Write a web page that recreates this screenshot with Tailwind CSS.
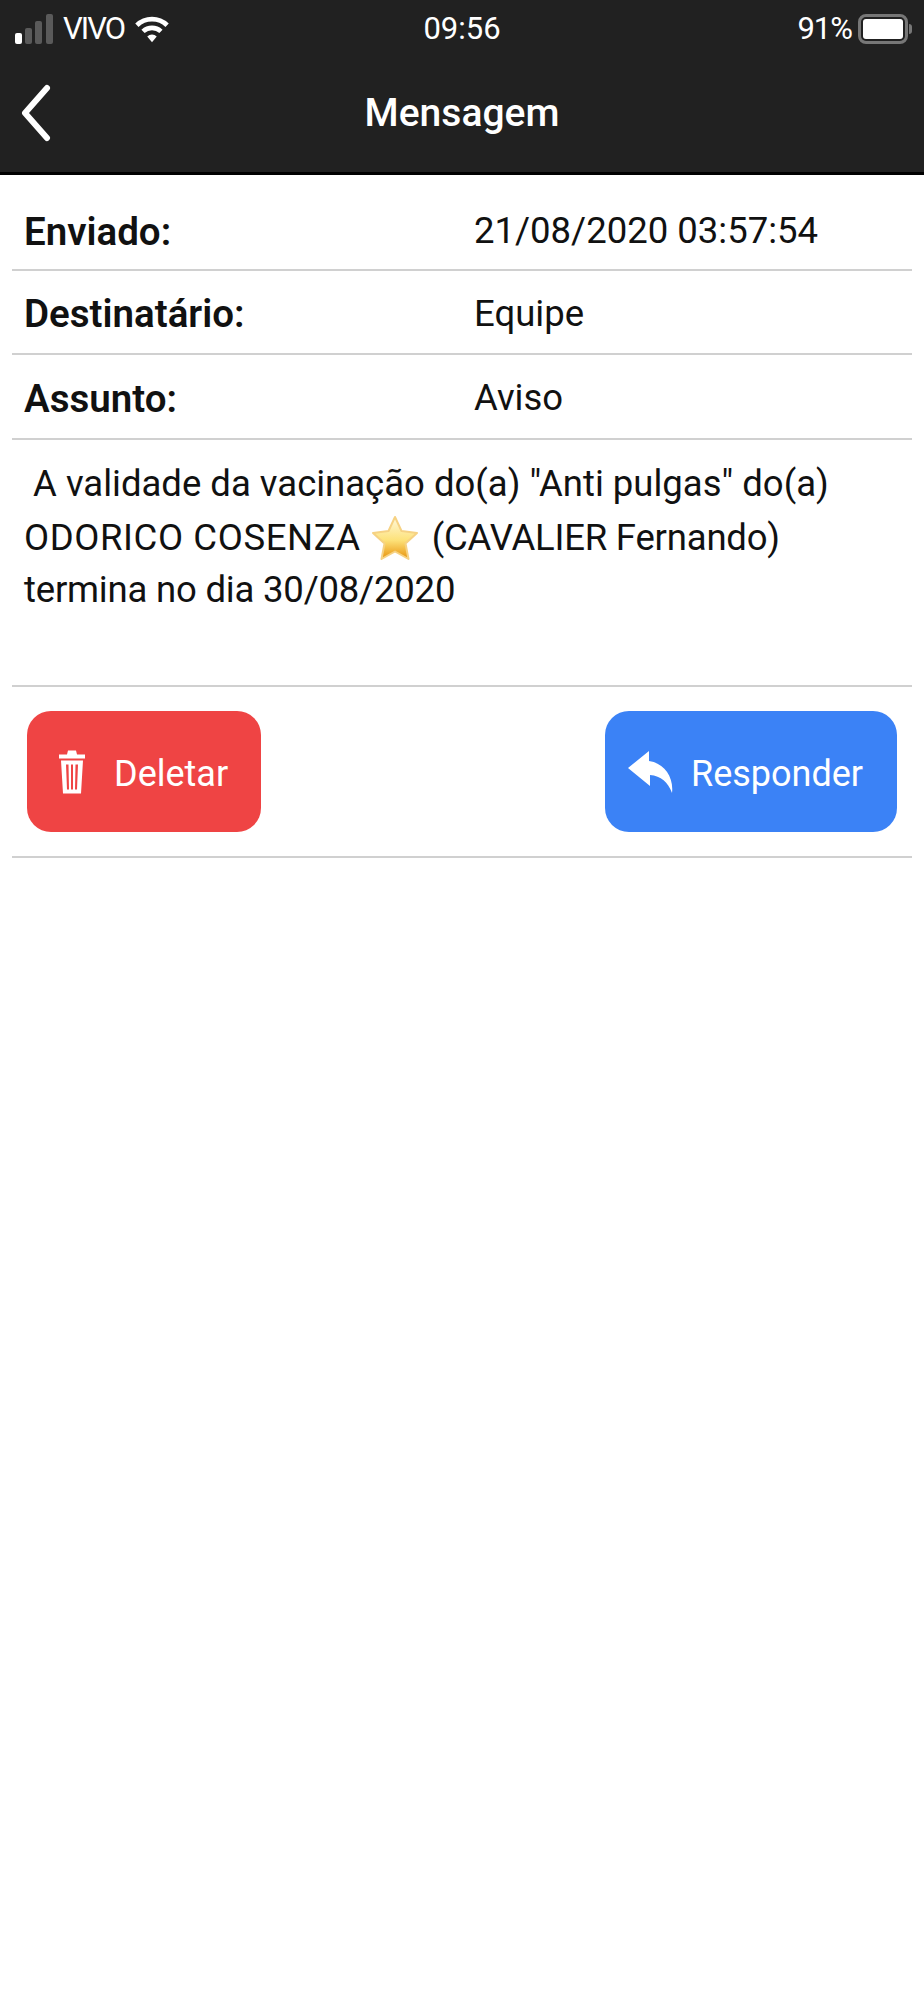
<!DOCTYPE html>
<html lang="pt-BR">
<head>
  <meta charset="UTF-8">
  <title>Mensagem</title>
  <script src="https://cdn.jsdelivr.net/npm/@tailwindcss/browser@4"></script>
</head>
<body class="bg-white min-h-screen font-['Roboto',sans-serif] text-[#111]">

  <!-- Barra do topo -->
  <header class="bg-[#212121] h-[175px] border-b-[3px] border-black text-white flex flex-col">
    <div class="h-[58px] pl-[15px] pr-[12px] flex items-center justify-between text-[31px]">
      <div class="flex items-center flex-1">
        <svg width="38" height="30" viewBox="0 0 38 30" class="mr-[10px]">
          <rect x="0" y="19" width="7" height="11" rx="2" fill="#fff"/>
          <rect x="10" y="14" width="7" height="16" rx="2" fill="#5a5a5a"/>
          <rect x="20" y="7" width="7" height="23" rx="2" fill="#5a5a5a"/>
          <rect x="31" y="0" width="7" height="30" rx="2" fill="#5a5a5a"/>
        </svg>
        <span class="tracking-[-2px]">VIVO</span>
        <svg width="34" height="30" viewBox="0 0 36 30" class="ml-[11px]">
          <path d="M2 11 A23 23 0 0 1 34 11" fill="none" stroke="#fff" stroke-width="5"/>
          <path d="M8.500 17.500 A14 14 0 0 1 27.500 17.500" fill="none" stroke="#fff" stroke-width="5"/>
          <path d="M13 23 L18 29 L23 23 A7 7 0 0 0 13 23 Z" fill="#fff"/>
        </svg>
      </div>
      <span class="flex-1 text-center pr-[3px]">09:56</span>
      <div class="flex items-center justify-end flex-1">
        <span class="mr-[6px] tracking-[-1px]">91%</span>
        <div class="w-[50px] h-[30px] border-[3px] border-[#777] rounded-[8px] p-[2px]">
          <div class="w-full h-full bg-white rounded-[3px]"></div>
        </div>
        <div class="w-[3px] h-[10px] bg-[#777] rounded-r-full ml-[1px]"></div>
      </div>
    </div>
    <div class="relative flex-1 flex items-center justify-center pb-[3px]">
      <svg width="30" height="58" viewBox="0 0 30 58" class="absolute left-[21px] top-[26px]">
        <path d="M26 4 L4 29 L26 54" fill="none" stroke="#fff" stroke-width="6" stroke-linecap="round" stroke-linejoin="round"/>
      </svg>
      <h1 class="text-[39px] font-medium">Mensagem</h1>
    </div>
  </header>

  <main class="px-[12px]">
    <div class="h-[96px] border-b-2 border-[#d0d0d0] flex items-center pl-[12px] pt-[19px]">
      <b class="w-[450px] text-[38.5px] font-semibold">Enviado:</b>
      <span class="text-[36.5px]">21/08/2020 03:57:54</span>
    </div>
    <div class="h-[84px] border-b-2 border-[#d0d0d0] flex items-center pl-[12px] pt-[4px]">
      <b class="w-[450px] text-[38.5px] font-semibold">Destinatário:</b>
      <span class="text-[36.5px]">Equipe</span>
    </div>
    <div class="h-[85px] border-b-2 border-[#d0d0d0] flex items-center pl-[12px] pt-[4px]">
      <b class="w-[450px] text-[38.5px] font-semibold">Assunto:</b>
      <span class="text-[36.5px]">Aviso</span>
    </div>

    <!-- Texto da mensagem -->
    <div class="h-[247px] border-b-2 border-[#d0d0d0] pl-[12px] pt-[17px] text-[36.5px] leading-[54px]">
      <div>&nbsp;A validade da vacinação do(a) "Anti pulgas" do(a)</div>
      <div class="flex items-center">
        <span class="tracking-[0.6px]">ODORICO COSENZA</span>
        <svg width="48" height="50" viewBox="0 0 48 46" class="ml-[10px] mr-[13px]">
          <defs>
            <linearGradient id="estrela" x1="0" y1="0" x2="0" y2="1">
              <stop offset="0" stop-color="#fff8dc"/>
              <stop offset="0.55" stop-color="#fde27a"/>
              <stop offset="1" stop-color="#e8930c"/>
            </linearGradient>
          </defs>
          <path d="M24 2 L30.500 16 L46 18 L34.500 28.500 L37.500 44 L24 36.500 L10.500 44 L13.500 28.500 L2 18 L17.500 16 Z" fill="url(#estrela)" stroke="#f6d283" stroke-width="2" stroke-linejoin="round"/>
        </svg>
        <span class="tracking-[-0.2px]">(CAVALIER Fernando)</span>
      </div>
      <div class="tracking-[-0.2px] -mt-[2px]">termina no dia 30/08/2020</div>
    </div>

    <!-- Botões -->
    <div class="h-[171px] border-b-2 border-[#d0d0d0] flex items-center justify-between px-[15px] text-white text-[36px]">
      <button class="w-[234px] h-[121px] bg-[#ef4444] rounded-[24px] flex items-center pl-[31px]">
        <svg width="28" height="47" viewBox="0 0 28 46" class="mr-[28px]">
          <path d="M1 6 H9 L10 2 H18 L19 6 H27 V10 H1 Z" fill="#fff"/>
          <path fill-rule="evenodd" d="M3 12 H25 L23 45 H5 Z M8 16 L9 41 H11 L10.500 16 Z M13 16 V41 H15 V16 Z M17.500 16 L17 41 H19 L20 16 Z" fill="#fff"/>
        </svg>
        <span class="pt-[5px]">Deletar</span>
      </button>
      <button class="w-[292px] h-[121px] bg-[#3b82f6] rounded-[24px] flex items-center pl-[23px]">
        <svg width="45" height="42" viewBox="0 0 45 42" class="mr-[18px]">
          <path d="M0 17 L21 0 V10 C36 12 46 26 44 42 C40 31 33 25 22 24 V35 Z" fill="#fff"/>
        </svg>
        <span class="pt-[5px]">Responder</span>
      </button>
    </div>
  </main>

</body>
</html>
